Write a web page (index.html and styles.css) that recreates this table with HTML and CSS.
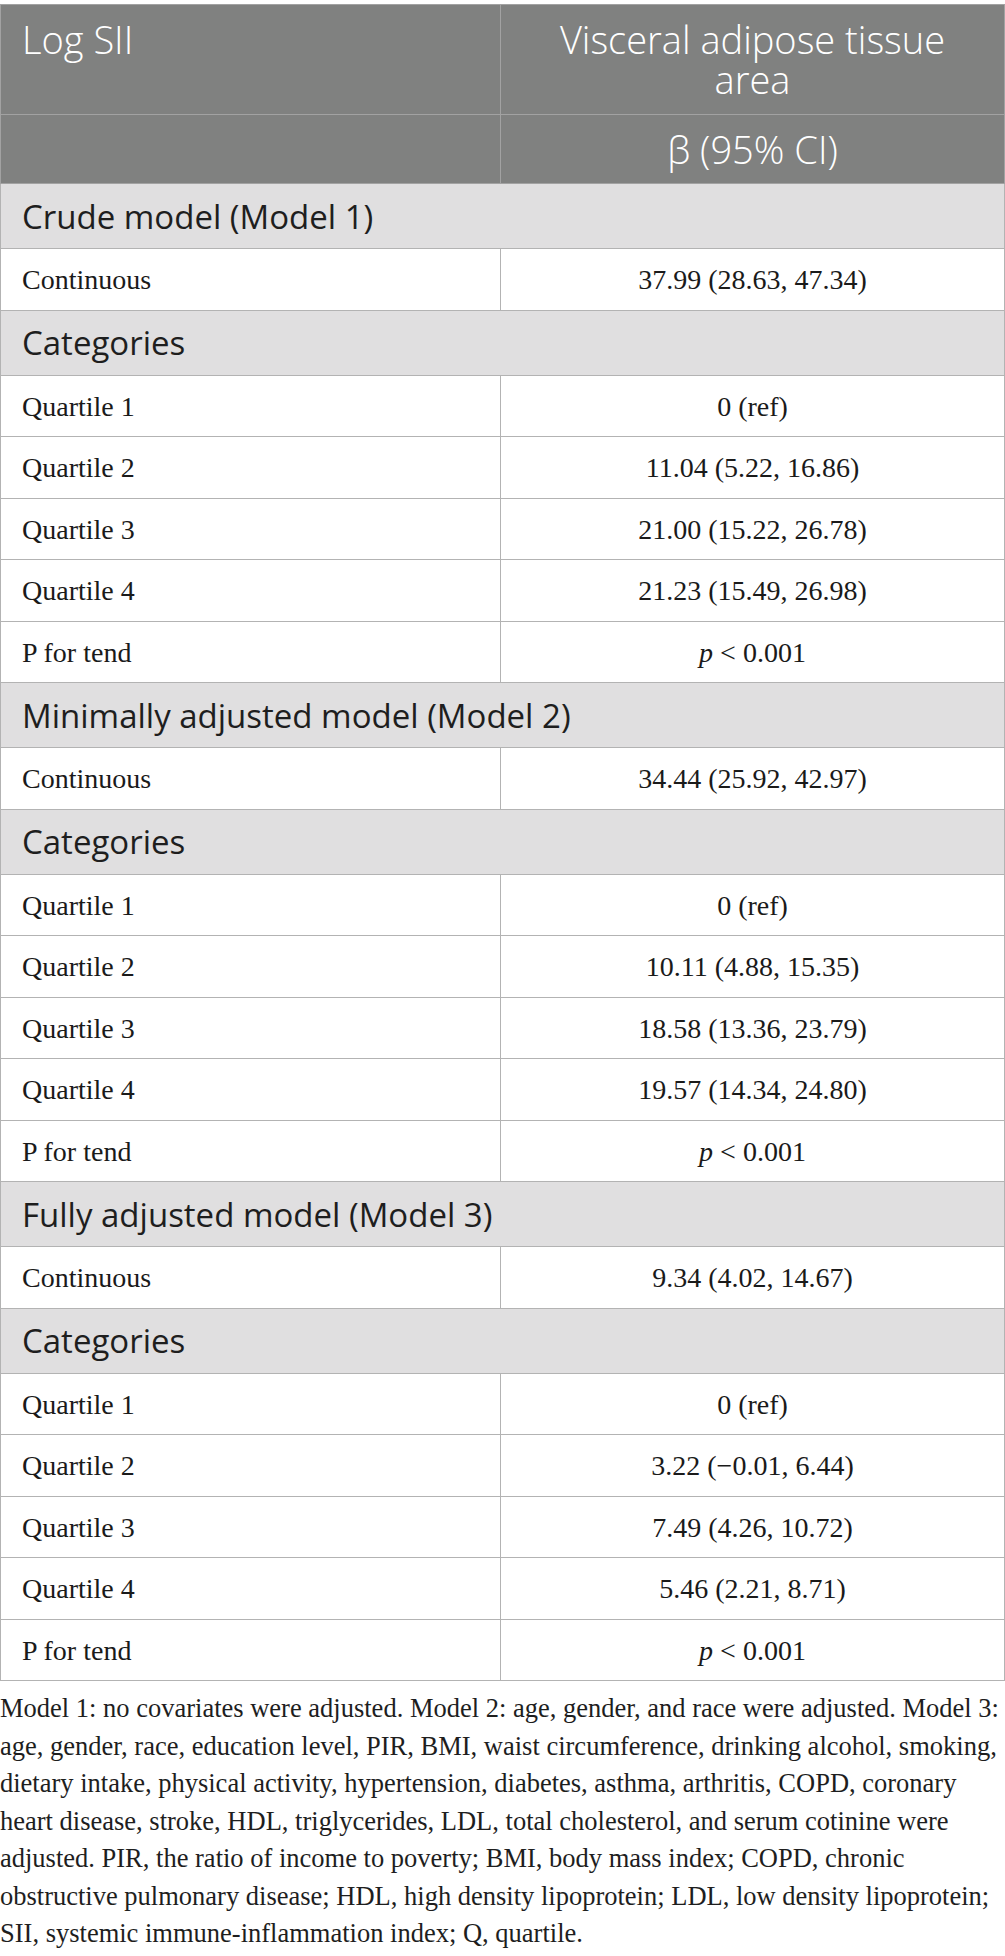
FILE: index.html
```html
<!DOCTYPE html>
<html lang="en">
<head>
<meta charset="utf-8">
<title>Log SII and visceral adipose tissue area</title>
<link rel="stylesheet" href="styles.css">
</head>
<body>
<div class="page">
<table class="tbl">
  <thead>
    <tr class="h1">
      <th class="hl">Log SII</th>
      <th class="hr">Visceral adipose tissue area</th>
    </tr>
    <tr class="h2">
      <th class="hl"></th>
      <th class="hr">β (95% CI)</th>
    </tr>
  </thead>
  <tbody>
    <tr class="sec"><td colspan="2">Crude model (Model 1)</td></tr>
    <tr class="row"><td class="lab">Continuous</td><td class="val">37.99 (28.63, 47.34)</td></tr>
    <tr class="sec"><td colspan="2">Categories</td></tr>
    <tr class="row"><td class="lab">Quartile 1</td><td class="val">0 (ref)</td></tr>
    <tr class="row"><td class="lab">Quartile 2</td><td class="val">11.04 (5.22, 16.86)</td></tr>
    <tr class="row"><td class="lab">Quartile 3</td><td class="val">21.00 (15.22, 26.78)</td></tr>
    <tr class="row"><td class="lab">Quartile 4</td><td class="val">21.23 (15.49, 26.98)</td></tr>
    <tr class="row"><td class="lab">P for tend</td><td class="val"><i>p</i> &lt; 0.001</td></tr>
    <tr class="sec"><td colspan="2">Minimally adjusted model (Model 2)</td></tr>
    <tr class="row"><td class="lab">Continuous</td><td class="val">34.44 (25.92, 42.97)</td></tr>
    <tr class="sec"><td colspan="2">Categories</td></tr>
    <tr class="row"><td class="lab">Quartile 1</td><td class="val">0 (ref)</td></tr>
    <tr class="row"><td class="lab">Quartile 2</td><td class="val">10.11 (4.88, 15.35)</td></tr>
    <tr class="row"><td class="lab">Quartile 3</td><td class="val">18.58 (13.36, 23.79)</td></tr>
    <tr class="row"><td class="lab">Quartile 4</td><td class="val">19.57 (14.34, 24.80)</td></tr>
    <tr class="row"><td class="lab">P for tend</td><td class="val"><i>p</i> &lt; 0.001</td></tr>
    <tr class="sec"><td colspan="2">Fully adjusted model (Model 3)</td></tr>
    <tr class="row"><td class="lab">Continuous</td><td class="val">9.34 (4.02, 14.67)</td></tr>
    <tr class="sec"><td colspan="2">Categories</td></tr>
    <tr class="row"><td class="lab">Quartile 1</td><td class="val">0 (ref)</td></tr>
    <tr class="row"><td class="lab">Quartile 2</td><td class="val">3.22 (−0.01, 6.44)</td></tr>
    <tr class="row"><td class="lab">Quartile 3</td><td class="val">7.49 (4.26, 10.72)</td></tr>
    <tr class="row"><td class="lab">Quartile 4</td><td class="val">5.46 (2.21, 8.71)</td></tr>
    <tr class="row"><td class="lab">P for tend</td><td class="val"><i>p</i> &lt; 0.001</td></tr>
  </tbody>
</table>
<p class="note">Model 1: no covariates were adjusted. Model 2: age, gender, and race were adjusted. Model 3: age, gender, race, education level, PIR, BMI, waist circumference, drinking alcohol, smoking, dietary intake, physical activity, hypertension, diabetes, asthma, arthritis, COPD, coronary heart disease, stroke, HDL, triglycerides, LDL, total cholesterol, and serum cotinine were adjusted. PIR, the ratio of income to poverty; BMI, body mass index; COPD, chronic obstructive pulmonary disease; HDL, high density lipoprotein; LDL, low density lipoprotein; SII, systemic immune-inflammation index; Q, quartile.</p>
</div>
</body>
</html>
```
FILE: styles.css
```css
html, body {
  margin: 0;
  padding: 0;
  background: #ffffff;
}

.page {
  width: 1005px;
  padding-top: 4px;
}

.tbl {
  width: 1005px;
  border-collapse: collapse;
  table-layout: fixed;
}

.tbl th,
.tbl td {
  box-sizing: border-box;
  border: 1px solid #b3b3b3;
}

.tbl thead th {
  background: #808180;
  color: #ffffff;
  font-family: "Open Sans", "Noto Sans", sans-serif;
  font-weight: 300;
  font-size: 38px;
  line-height: 40px;
  border-color: #a2a2a2;
  vertical-align: top;
  padding-top: 14px;
  padding-bottom: 14px;
}

.tbl thead .hl {
  width: 500px;
  text-align: left;
  padding-left: 21px;
  padding-right: 10px;
}

.tbl thead .hr {
  text-align: center;
  padding-left: 40px;
  padding-right: 40px;
}

.tbl .h1 th {
  height: 110px;
}

.tbl .h2 th {
  height: 69px;
  padding-top: 14px;
  padding-bottom: 14px;
}

.tbl .sec td {
  height: 65px;
  background: #e0dfe0;
  color: #1e1e1e;
  font-family: "Open Sans", "Noto Sans", sans-serif;
  font-size: 33px;
  line-height: 40px;
  vertical-align: middle;
  padding: 1px 21px 0 21px;
}

.tbl .row td {
  height: 61.5px;
  font-family: "Liberation Serif", "Times New Roman", serif;
  font-size: 28px;
  line-height: 32px;
  color: #1a1a1a;
  vertical-align: middle;
  padding: 2px 20px 0 21px;
}

.tbl .row .val {
  text-align: center;
  padding-left: 10px;
  padding-right: 10px;
}

.note {
  margin: 9px 0 0 0;
  font-family: "Liberation Serif", "Times New Roman", serif;
  font-size: 26.5px;
  line-height: 37.5px;
  color: #1e1e1e;
}
```
